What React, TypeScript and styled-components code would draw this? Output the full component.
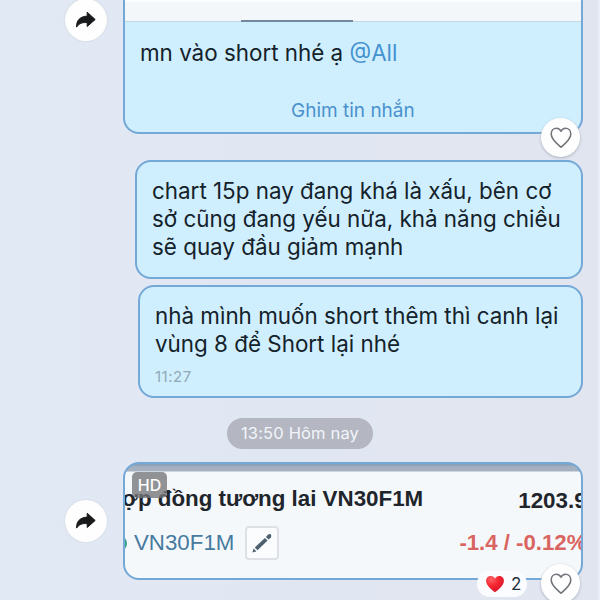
import React from "react";
import styled, { createGlobalStyle, css } from "styled-components";

const GlobalStyle = createGlobalStyle`
  * { box-sizing: border-box; }
  body { margin: 0; background: #e0e7f2; }
`;

const Chat = styled.main`
  position: relative;
  width: 600px;
  height: 600px;
  overflow: hidden;
  display: flex;
  flex-direction: column;
  align-items: flex-end;
  padding-right: 17px;
  background: linear-gradient(90deg, #e1e9f4, #e1e5f0);
  border-right: 2px solid #e9eff9;
  font-family: Inter, "Liberation Sans", sans-serif;
  color: #14222b;
`;

const Row = styled.div<{ $gap: number; $height: number }>`
  position: relative;
  display: flex;
  flex: none;
  justify-content: flex-end;
  margin-top: ${(p) => p.$gap}px;
  margin-right: -2px;
  height: ${(p) => p.$height}px;
`;

const surface = css`
  border: 2px solid #74a8d6;
  border-radius: 16px;
  background: #d0effe;
`;

const Bubble = styled.section<{ $width: number; $top: number }>`
  ${surface}
  width: ${(p) => p.$width}px;
  padding: ${(p) => p.$top}px 0 0 15px;
`;

const PinnedBubble = styled.section`
  ${surface}
  width: 460px;
  border-top: 0;
  border-radius: 0 0 16px 16px;
  overflow: hidden;
`;

const Preview = styled.div`
  height: 22px;
  padding-left: 116px;
  display: flex;
  align-items: flex-end;
  background: linear-gradient(#fafcfd 0 2px, #f4f7fa 2px);
  border-bottom: 1px solid #c5d7e2;
`;

const TabMark = styled.div`
  width: 112px;
  height: 2px;
  margin-bottom: -1px;
  background: #71899a;
`;

const Line = styled.p`
  margin: 0;
  height: 28px;
  font-size: 22.4px;
  line-height: 28px;
  white-space: nowrap;
`;

const PinnedText = styled.div`
  padding: 17px 0 0 15px;
`;

const Mention = styled.span`
  color: #4592d0;
`;

const PinLink = styled.div`
  margin: 32px 0 0 166px;
  color: #4a91cd;
  font-size: 19px;
  line-height: 24px;
  white-space: nowrap;
`;

const Time = styled.time`
  display: block;
  margin-top: 9px;
  color: #91a9b8;
  font-size: 15px;
  line-height: 20px;
  letter-spacing: 0.5px;
`;

const DatePill = styled.div`
  align-self: flex-start;
  flex: none;
  width: 146px;
  height: 31px;
  margin: 20px 0 0 227px;
  border-radius: 16px;
  background: #b4b7c1;
  color: #f2f5fa;
  font-size: 16.5px;
  line-height: 31px;
  letter-spacing: 0.15px;
  text-align: center;
  white-space: nowrap;
`;

const RoundButton = styled.button`
  display: flex;
  align-items: center;
  justify-content: center;
  padding: 0;
  border: 0;
  border-radius: 50%;
  background: #fefefe;
`;

const ForwardButton = styled(RoundButton)<{ $top: number }>`
  flex: none;
  width: 42px;
  height: 42px;
  margin: ${(p) => p.$top}px 16px 0 0;
  box-shadow: 0 0 2px #c9ced6;
`;

const LikeButton = styled(RoundButton)`
  position: absolute;
  right: 3px;
  bottom: -23px;
  width: 39px;
  height: 39px;
  box-shadow: 0 1px 3px #aab1bd;
`;

const QuoteCard = styled.section`
  ${surface}
  position: relative;
  width: 460px;
  overflow: hidden;
  background: linear-gradient(#829db9 0, #a5b1c1 3px, #a5b1c1 7px, #f5f8fb 8px);
  font-family: "Liberation Sans", Arial, sans-serif;
`;

const QuoteHead = styled.div`
  display: flex;
  justify-content: space-between;
  width: 477px;
  padding-top: 22px;
  margin-left: -3px;
  color: #20252b;
  font-size: 22.35px;
  font-weight: 700;
  line-height: 26px;
  white-space: nowrap;
`;

const Price = styled.span`
  position: relative;
  top: 2px;
`;

const Contract = styled.div`
  display: flex;
  align-items: center;
  height: 34px;
  margin-top: 14px;
  padding-left: 8px;
  color: #467a9f;
  font-size: 22.3px;
  white-space: nowrap;
`;

const Status = styled.i`
  flex: none;
  width: 10px;
  height: 13px;
  margin-left: -16px;
  margin-right: 7px;
  border-radius: 50%;
  background: #36a28a;
`;

const EditButton = styled.button`
  flex: none;
  width: 34px;
  height: 34px;
  margin-left: 11px;
  padding: 0;
  display: flex;
  align-items: center;
  justify-content: center;
  border: 2px solid #dde1e5;
  border-radius: 4px;
  background: #fafcfd;
`;

const Change = styled.strong`
  margin-left: 180px;
  color: #da6460;
  font-size: 22.2px;
`;

const HdBadge = styled.span`
  position: absolute;
  left: 7px;
  top: 8px;
  width: 35px;
  height: 26px;
  border-radius: 5px;
  background: rgba(115, 117, 120, 0.78);
  color: #fff;
  font: 500 16px/27px Inter, sans-serif;
  text-align: center;
`;

const Reaction = styled.div`
  position: absolute;
  right: 56px;
  bottom: -17px;
  width: 50px;
  height: 26px;
  display: flex;
  align-items: center;
  gap: 6px;
  padding-left: 8px;
  border-radius: 13px;
  background: #fafcff;
  color: #27313b;
  font-size: 17px;
`;

const ForwardIcon = () => (
  <svg width="22" height="18" viewBox="0 0 22 18">
    <path d="M12.2 1.2 20.2 8.5 12.2 15.5V11.7C7.1 11.1 4.2 12.5 1.6 16.1 1.3 9.7 4.8 5.5 12.2 5.1Z" fill="#17191b" stroke="#17191b" strokeWidth="1" strokeLinejoin="round" />
  </svg>
);

const HEART = "M11 20.2C8.5 17.7 1.2 12.6 1.2 6.9 1.2 3.4 3.6 1.2 6.4 1.2 8.4 1.2 10.2 2.4 11 4.3 11.8 2.4 13.6 1.2 15.6 1.2 18.4 1.2 20.8 3.4 20.8 6.9 20.8 12.6 13.5 17.7 11 20.2Z";

const HeartOutline = () => (
  <svg width="22" height="21" viewBox="0 0 22 21">
    <path d={HEART} fill="none" stroke="#72767b" strokeWidth="1.6" strokeLinejoin="round" />
  </svg>
);

const RedHeart = () => (
  <svg width="20" height="18" viewBox="0 0 22 21" preserveAspectRatio="none">
    <defs>
      <radialGradient id="heart" cx=".3" cy=".2" r=".8">
        <stop stopColor="#ff6268" />
        <stop offset=".5" stopColor="#f52730" />
        <stop offset="1" stopColor="#d9162a" />
      </radialGradient>
    </defs>
    <path d={HEART} fill="url(#heart)" />
  </svg>
);

const PencilIcon = () => (
  <svg width="20" height="20" viewBox="0 0 20 20" fill="#4c6070">
    <path d="M.4 19.6 1.6 15.6 4.4 18.4Z" />
    <path d="M2.8 14.4 12.9 4.9 15.6 7.5 5.5 17.2Z" />
    <path d="M13.9 4 15.7 1.9Q17.4.4 18.9 1.6 20 3 18.7 4.7L16.6 6.6Z" />
  </svg>
);

export default function App() {
  return (
    <>
      <GlobalStyle />
      <Chat>
        <Row $gap={0} $height={134}>
          <ForwardButton $top={-1} aria-label="Chuyển tiếp"><ForwardIcon /></ForwardButton>
          <PinnedBubble>
            <Preview><TabMark /></Preview>
            <PinnedText>
              <Line>mn vào short nhé ạ <Mention>@All</Mention></Line>
            </PinnedText>
            <PinLink>Ghim tin nhắn</PinLink>
          </PinnedBubble>
          <LikeButton aria-label="Thích"><HeartOutline /></LikeButton>
        </Row>
        <Row $gap={26} $height={119}>
          <Bubble $width={448} $top={15}>
            <Line>chart 15p nay đang khá là xấu, bên cơ</Line>
            <Line>sở cũng đang yếu nữa, khả năng chiều</Line>
            <Line>sẽ quay đầu giảm mạnh</Line>
          </Bubble>
        </Row>
        <Row $gap={6} $height={113}>
          <Bubble $width={445} $top={15}>
            <Line>nhà mình muốn short thêm thì canh lại</Line>
            <Line>vùng 8 để Short lại nhé</Line>
            <Time>11:27</Time>
          </Bubble>
        </Row>
        <DatePill>13:50 Hôm nay</DatePill>
        <Row $gap={13} $height={118}>
          <ForwardButton $top={38} aria-label="Chuyển tiếp"><ForwardIcon /></ForwardButton>
          <QuoteCard>
            <QuoteHead>
              <span>ợp đồng tương lai VN30F1M</span>
              <Price>1203.90</Price>
            </QuoteHead>
            <Contract>
              <Status />
              VN30F1M
              <EditButton aria-label="Sửa"><PencilIcon /></EditButton>
              <Change>-1.4 / -0.12%</Change>
            </Contract>
            <HdBadge>HD</HdBadge>
          </QuoteCard>
          <Reaction><RedHeart />2</Reaction>
          <LikeButton aria-label="Thích"><HeartOutline /></LikeButton>
        </Row>
      </Chat>
    </>
  );
}
